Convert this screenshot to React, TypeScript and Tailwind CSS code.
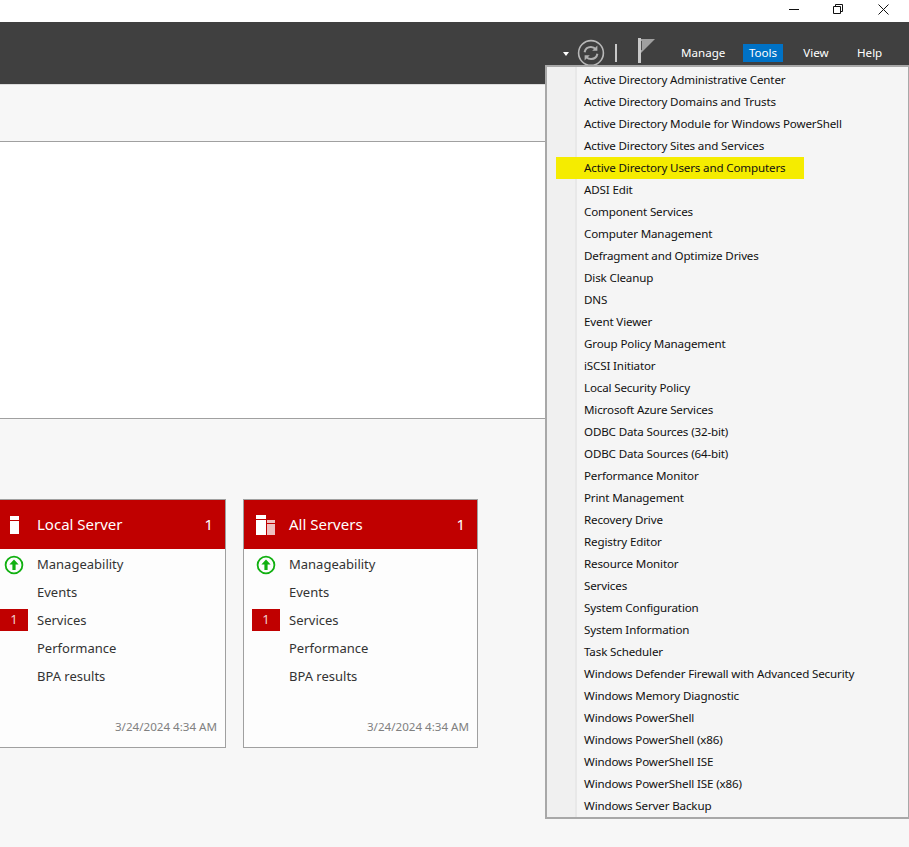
import * as React from "react";

const TOOLS = [
  "Active Directory Administrative Center",
  "Active Directory Domains and Trusts",
  "Active Directory Module for Windows PowerShell",
  "Active Directory Sites and Services",
  "Active Directory Users and Computers",
  "ADSI Edit",
  "Component Services",
  "Computer Management",
  "Defragment and Optimize Drives",
  "Disk Cleanup",
  "DNS",
  "Event Viewer",
  "Group Policy Management",
  "iSCSI Initiator",
  "Local Security Policy",
  "Microsoft Azure Services",
  "ODBC Data Sources (32-bit)",
  "ODBC Data Sources (64-bit)",
  "Performance Monitor",
  "Print Management",
  "Recovery Drive",
  "Registry Editor",
  "Resource Monitor",
  "Services",
  "System Configuration",
  "System Information",
  "Task Scheduler",
  "Windows Defender Firewall with Advanced Security",
  "Windows Memory Diagnostic",
  "Windows PowerShell",
  "Windows PowerShell (x86)",
  "Windows PowerShell ISE",
  "Windows PowerShell ISE (x86)",
  "Windows Server Backup",
];

function WindowControls() {
  return (
    <div className="flex h-[22px] items-start justify-end bg-white">
      <svg width="14" height="14" viewBox="0 0 14 14" className="mt-[2px] mr-[31px]">
        <path d="M2 7.5h10" stroke="#111" strokeWidth="1" />
      </svg>
      <svg width="12" height="12" viewBox="0 0 12 12" className="mt-[3px] mr-[33px]" fill="none" stroke="#111">
        <path d="M1.500 3.500h7v7h-7z" />
        <path d="M3.500 3.500v-2h7v7h-2" />
      </svg>
      <svg width="14" height="14" viewBox="0 0 14 14" className="mt-[2px] mr-[18px]" fill="none" stroke="#111">
        <path d="M1.500 2.500l10 10M11.500 2.500l-10 10" />
      </svg>
    </div>
  );
}

function RefreshIcon() {
  return (
    <svg width="28" height="28" viewBox="0 0 28 28" fill="none">
      <circle cx="14" cy="14" r="12.400" stroke="#b8b8b8" strokeWidth="1.600" />
      <path d="M7.600 13.200c.6-3.200 3.200-5.200 6.300-5.200 2 0 3.600.8 4.800 2.200" stroke="#b0b0b0" strokeWidth="2" />
      <path d="M20.400 6.600v5.200h-5.200z" fill="#b0b0b0" />
      <path d="M20.400 14.800c-.6 3.200-3.200 5.200-6.300 5.200-2 0-3.600-.8-4.800-2.200" stroke="#b0b0b0" strokeWidth="2" />
      <path d="M7.600 21.400v-5.200h5.200z" fill="#b0b0b0" />
    </svg>
  );
}

function FlagIcon() {
  return (
    <svg width="18" height="25" viewBox="0 0 18 25">
      <path d="M0 0h3v25H0z" fill="#c8c8c8" />
      <path d="M3 1h14L3 15z" fill="#a0a0a0" />
      <path d="M3.500 3v9" stroke="#505050" strokeWidth="1" />
    </svg>
  );
}

function TopBar() {
  return (
    <div className="flex h-[62px] items-end justify-end bg-[#404040] pb-[22px] text-[11.6px] text-white">
      <div className="mb-[6px] mr-[8px] h-0 w-0 border-x-[3.5px] border-t-[4px] border-x-transparent border-t-white" />
      <div className="-mb-[5px] mr-[10px]">
        <RefreshIcon />
      </div>
      <div className="mr-[21px] h-[18px] w-[2px] bg-[#c8c8c8]" />
      <div className="-mb-[1px] mr-[25px]">
        <FlagIcon />
      </div>
      <span className="mr-[19px] w-[43px] text-center leading-[18px]">Manage</span>
      <span className="mr-[20px] w-[40px] bg-[#0072c6] text-center leading-[18px]">Tools</span>
      <span className="mr-[28px] w-[26px] text-center leading-[18px]">View</span>
      <span className="mr-[28px] w-[24px] text-center leading-[18px]">Help</span>
    </div>
  );
}

function ToolsMenu() {
  return (
    <div className="absolute top-[65px] left-[545px] flex h-[754px] w-[364px] border-2 border-r border-[#a8a8a8] bg-[#f5f5f5] text-[11.6px] tracking-[-0.15px] text-[#111]">
      <div className="w-[30px] border-r-2 border-[#e8e8e8] bg-[#f0f0f0]" />
      <ul className="flex-1 pt-[2px]">
        {TOOLS.map((t) => (
          <li key={t} className="relative h-[22px] pl-[7px] leading-[22px] whitespace-nowrap">
            {t === "Active Directory Users and Computers" && (
              <span className="absolute top-0 left-[-21px] h-[22px] w-[248px] bg-[#f5ec00]" />
            )}
            <span className="relative">{t}</span>
          </li>
        ))}
      </ul>
    </div>
  );
}

function ServerIcon({ all }: { all?: boolean }) {
  if (all) {
    return (
      <svg width="20" height="20" viewBox="0 0 20 20">
        <path d="M0 0h10v4H0zM0 5h10v15H0z" fill="#fff" />
        <path d="M11 5h8v3h-8zM11 9h8v11h-8z" fill="#efc0c0" />
      </svg>
    );
  }
  return (
    <svg width="9" height="18" viewBox="0 0 9 18">
      <path d="M0 0h9v4H0zM0 5h9v13H0z" fill="#fff" />
    </svg>
  );
}

function UpIcon() {
  return (
    <svg width="20" height="20" viewBox="0 0 20 20" fill="none">
      <circle cx="10" cy="10" r="8.400" stroke="#10b010" strokeWidth="1.800" />
      <path d="M10 4.500l4.600 5h-3v5.500H8.400V9.500h-3z" fill="#10b010" />
    </svg>
  );
}

function ServerCard({ title, all }: { title: string; all?: boolean }) {
  return (
    <div className="flex h-[249px] w-[235px] flex-col border border-[#a0a0a0] bg-[#fdfdfd]">
      <div className="flex h-[49px] shrink-0 items-center bg-[#c00000] text-[15px] text-white">
        <div className="flex w-[36px] justify-center pl-[8px]">
          <ServerIcon all={all} />
        </div>
        <span className="ml-[9px] flex-1">{title}</span>
        <span className="mr-[12px]">1</span>
      </div>
      <div className="flex-1 pt-[1px] pl-[8px] text-[13px] text-[#333]">
        <div className="flex h-[28px] items-center pt-[2px]">
          <div className="flex w-[28px] justify-center">
            <UpIcon />
          </div>
          <span className="ml-[9px]">Manageability</span>
        </div>
        <div className="h-[28px] pl-[37px] leading-[28px]">Events</div>
        <div className="flex h-[28px] items-center">
          <div className="flex h-[22px] w-[28px] items-center justify-center bg-[#c00000] text-[#f0d0d0]">1</div>
          <span className="ml-[9px] pt-[2px]">Services</span>
        </div>
        <div className="h-[28px] pl-[37px] leading-[28px]">Performance</div>
        <div className="h-[28px] pl-[37px] leading-[28px]">BPA results</div>
      </div>
      <div className="pr-[8px] pb-[12px] text-right text-[11.6px] text-[#808080]">3/24/2024 4:34 AM</div>
    </div>
  );
}

export default function App() {
  return (
    <div className="relative h-[847px] w-[909px] overflow-hidden bg-[#f7f7f7] font-['Noto_Sans',sans-serif]">
      <WindowControls />
      <TopBar />
      <div className="h-[58px] border-t border-b border-t-[#dcdcdc] border-b-[#a0a0a0]" />
      <div className="h-[277px] border-b border-[#a0a0a0] bg-white" />
      <div className="mt-[80px] ml-[-9px] flex gap-[17px]">
        <ServerCard title="Local Server" />
        <ServerCard title="All Servers" all />
      </div>
      <ToolsMenu />
    </div>
  );
}
